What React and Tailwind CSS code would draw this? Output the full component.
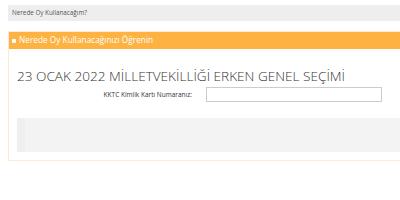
export default function App() {
  return (
    <div className="min-h-[200px] bg-white pt-[5px] pl-2" style={{ fontFamily: '"Open Sans", sans-serif' }}>
      <div className="h-4 bg-[#eeeeee] flex items-center pl-1 text-[6.3px] text-[#555]">
        Nerede Oy Kullanacağım?
      </div>
      <div className="mt-[10px] border border-[#fde9d6] border-r-0">
        <div className="h-[17px] bg-[#fdb241] flex items-center gap-[3px] pl-[3px] text-[8.3px] text-white">
          <span className="w-[4px] h-[4px] rounded-[1px] bg-white" />
          Nerede Oy Kullanacağınızı Öğrenin
        </div>
        <div className="pl-2 pt-[17px] pb-2">
          <h1 className="text-[13.6px] leading-[20px] font-light text-[#333]">
            23 OCAK 2022 MİLLETVEKİLLİĞİ ERKEN GENEL SEÇİMİ
          </h1>
          <div className="flex items-center mt-[1px] h-[15px]">
            <label className="w-[189px] text-right text-[6.5px] text-[#333] pr-[14px]">KKTC Kimlik Kartı Numaranız:</label>
            <input type="text" className="w-[176px] h-[15px] border border-[#cccccc] bg-white" />
          </div>
          <div className="mt-4 h-[34px] bg-[#f3f3f3] border-l-[8px] border-[#efefef]" />
        </div>
      </div>
    </div>
  );
}
